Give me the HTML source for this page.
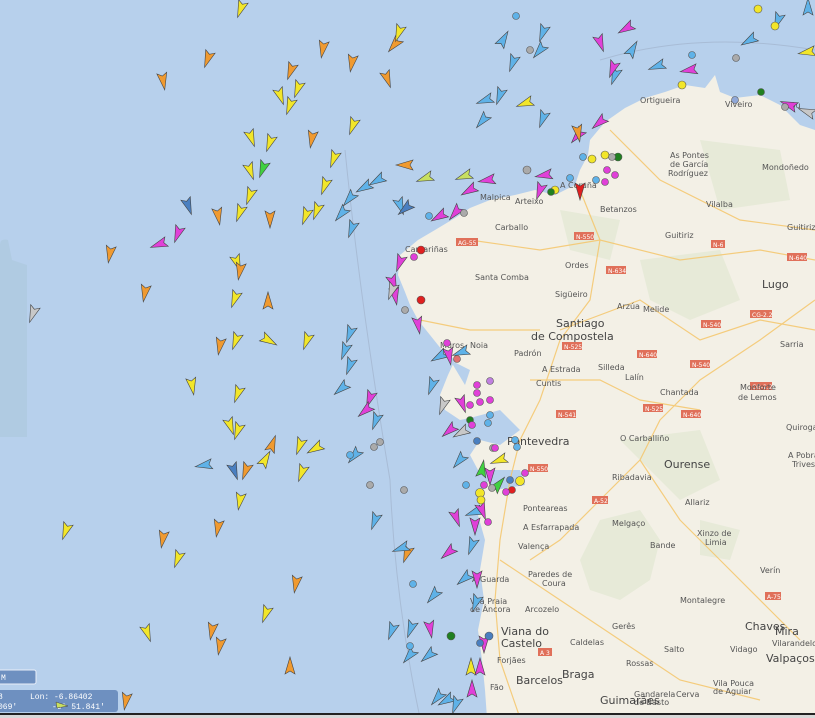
<!DOCTYPE html>
<html><head><meta charset="utf-8"><style>
html,body{margin:0;padding:0;width:815px;height:718px;overflow:hidden;background:#b7d0ec;font-family:"Liberation Sans",sans-serif}
svg{display:block}
.t{font-family:"DejaVu Sans","Liberation Sans",sans-serif;font-size:8px;fill:#555}
.tb{font-family:"DejaVu Sans","Liberation Sans",sans-serif;font-size:11px;fill:#444}
.r{fill:#e0705a}
.rt{font-family:"DejaVu Sans",sans-serif;font-size:6px;fill:#fff}
</style></head><body>
<svg width="815" height="718" viewBox="0 0 815 718" xmlns="http://www.w3.org/2000/svg">
<defs>
<path id="s" d="M0,-10 L5,7 L0,4 L-5,7 Z" stroke="#444" stroke-width="0.6"/>
</defs>
<rect width="815" height="718" fill="#b7d0ec"/>
<path d="M0,245 Q0,238 8,240 L12,260 L27,265 L27,437 L0,437 Z" fill="#b0cbe2"/>
<path d="M345,150 Q360,300 390,480 Q395,600 420,718" stroke="#a8bcd6" fill="none" stroke-width="1"/>
<path d="M600,60 Q700,30 815,50" stroke="#a8bcd6" fill="none" stroke-width="1"/>
<!-- land -->
<path d="M815,130 L800,125 L780,105 L760,95 L735,98 L720,92 L715,75 L705,88 L685,85 L665,92 L645,98 L625,108 L605,122 L590,140 L588,155 L580,170 L575,185 L555,195 L535,190 L515,195 L490,200 L470,208 L455,218 L435,230 L418,240 L400,255 L398,275 L405,292 L410,305 L418,320 L430,335 L442,350 L455,360 L448,375 L440,395 L445,410 L460,420 L470,418 L480,440 L470,455 L478,470 L490,478 L480,495 L478,515 L485,540 L480,570 L484,600 L478,630 L482,660 L485,690 L487,718 L815,718 Z" fill="#f3f0e6"/>
<path d="M470,418 L500,410 L520,430 L500,445 L480,440Z M480,470 L520,470 L525,485 L495,490Z M450,360 L470,370 L465,385Z" fill="#b7d0ec"/>
<path d="M600,520 L640,510 L660,540 L650,580 L620,600 L590,590 L580,560Z M700,520 L740,530 L730,560 L700,555Z M620,440 L700,430 L720,480 L680,500Z M560,210 L620,220 L610,260 L570,250Z M640,260 L720,250 L740,300 L690,320 L650,300Z M700,140 L780,150 L790,200 L720,210Z" fill="#e4e8d4" opacity="0.8"/>
<g stroke="#f5c66b" stroke-width="1.2" fill="none" opacity="0.85">
<path d="M580,190 L600,240 L590,300 L560,340 L540,400 L520,440 L510,480 L500,540 L495,600 L500,660 L520,718"/>
<path d="M560,330 L640,300 L700,340 L760,320 L815,330"/>
<path d="M640,460 L660,420 L700,380 L760,340 L815,300"/>
<path d="M640,460 L680,520 L720,560 L770,610 L800,640"/>
<path d="M610,130 L660,180 L740,220 L815,230"/>
<path d="M470,240 L540,250 L600,240 L680,260 L760,250 L815,260"/>
<path d="M530,380 L600,380 L640,400 L700,410"/>
<path d="M500,560 L560,600 L620,640 L680,680 L760,700"/>
<path d="M640,460 L600,500 L560,540 L530,560"/>
<path d="M420,320 L470,330 L540,330"/>
</g>
<!-- road shields -->
<g>
<rect class="r" x="456" y="238" width="22" height="8"/><text class="rt" x="458" y="245">AG-55</text>
<rect class="r" x="574" y="232" width="20" height="8"/><text class="rt" x="576" y="239">N-550</text>
<rect class="r" x="606" y="266" width="20" height="8"/><text class="rt" x="608" y="273">N-634</text>
<rect class="r" x="711" y="240" width="14" height="8"/><text class="rt" x="713" y="247">N-6</text>
<rect class="r" x="787" y="253" width="20" height="8"/><text class="rt" x="789" y="260">N-640</text>
<rect class="r" x="562" y="342" width="20" height="8"/><text class="rt" x="564" y="349">N-525</text>
<rect class="r" x="637" y="350" width="20" height="8"/><text class="rt" x="639" y="357">N-640</text>
<rect class="r" x="701" y="320" width="20" height="8"/><text class="rt" x="703" y="327">N-540</text>
<rect class="r" x="750" y="310" width="22" height="8"/><text class="rt" x="752" y="317">CG-2.2</text>
<rect class="r" x="750" y="382" width="22" height="8"/><text class="rt" x="752" y="389">CG-2.2</text>
<rect class="r" x="690" y="360" width="20" height="8"/><text class="rt" x="692" y="367">N-540</text>
<rect class="r" x="556" y="410" width="20" height="8"/><text class="rt" x="558" y="417">N-541</text>
<rect class="r" x="643" y="404" width="20" height="8"/><text class="rt" x="645" y="411">N-525</text>
<rect class="r" x="681" y="410" width="20" height="8"/><text class="rt" x="683" y="417">N-640</text>
<rect class="r" x="528" y="464" width="20" height="8"/><text class="rt" x="530" y="471">N-550</text>
<rect class="r" x="592" y="496" width="16" height="8"/><text class="rt" x="594" y="503">A-52</text>
<rect class="r" x="765" y="592" width="16" height="8"/><text class="rt" x="767" y="599">A-75</text>
<rect class="r" x="538" y="648" width="14" height="8"/><text class="rt" x="540" y="655">A 3</text>
</g>
<!-- labels -->
<g class="t">
<text x="640" y="103">Ortigueira</text><text x="725" y="107">Viveiro</text><text x="790" y="108">Bu</text>
<text x="670" y="158">As Pontes</text><text x="670" y="167">de García</text><text x="668" y="176">Rodríguez</text>
<text x="762" y="170">Mondoñedo</text><text x="560" y="188">A Coruña</text><text x="515" y="204">Arteixo</text>
<text x="480" y="200">Malpica</text><text x="600" y="212">Betanzos</text><text x="495" y="230">Carballo</text>
<text x="706" y="207">Vilalba</text><text x="787" y="230">Guitiriz</text><text x="665" y="238">Guitiriz</text>
<text x="405" y="252">Camariñas</text><text x="565" y="268">Ordes</text><text x="475" y="280">Santa Comba</text>
<text x="555" y="297">Sigüeiro</text><text x="617" y="309">Arzúa</text><text x="643" y="312">Melide</text>
<text x="780" y="347">Sarria</text><text x="440" y="348">Muros</text><text x="470" y="348">Noia</text>
<text x="514" y="356">Padrón</text><text x="542" y="372">A Estrada</text><text x="598" y="370">Silleda</text>
<text x="625" y="380">Lalín</text><text x="536" y="386">Cuntis</text><text x="660" y="395">Chantada</text>
<text x="740" y="390">Monforte</text><text x="738" y="400">de Lemos</text><text x="786" y="430">Quiroga</text>
<text x="620" y="441">O Carballiño</text><text x="788" y="458">A Pobra</text><text x="792" y="467">Trives</text>
<text x="612" y="480">Ribadavia</text><text x="685" y="505">Allariz</text>
<text x="697" y="536">Xinzo de</text><text x="705" y="545">Limia</text><text x="760" y="573">Verín</text>
<text x="650" y="548">Bande</text><text x="523" y="511">Ponteareas</text><text x="523" y="530">A Esfarrapada</text>
<text x="612" y="526">Melgaço</text><text x="518" y="549">Valença</text><text x="528" y="577">Paredes de</text><text x="542" y="586">Coura</text>
<text x="680" y="603">Montalegre</text><text x="525" y="612">Arcozelo</text><text x="472" y="582">A Guarda</text>
<text x="470" y="604">Vila Praia</text><text x="470" y="612">de Âncora</text><text x="612" y="629">Gerês</text>
<text x="570" y="645">Caldelas</text><text x="664" y="652">Salto</text><text x="730" y="652">Vidago</text>
<text x="772" y="646">Vilarandelo</text><text x="626" y="666">Rossas</text><text x="497" y="663">Forjães</text>
<text x="713" y="686">Vila Pouca</text><text x="713" y="694">de Aguiar</text><text x="634" y="697">Gandarela</text><text x="634" y="705">de Basto</text>
<text x="676" y="697">Cerva</text><text x="490" y="690">Fão</text>
</g>
<g class="tb">
<text x="556" y="327">Santiago</text><text x="531" y="328" dy="12">de Compostela</text>
<text x="762" y="288">Lugo</text><text x="664" y="468">Ourense</text><text x="507" y="445">Pontevedra</text>
<text x="745" y="630">Chaves</text><text x="501" y="635">Viana do</text><text x="501" y="647">Castelo</text>
<text x="516" y="684">Barcelos</text><text x="562" y="678">Braga</text><text x="766" y="662">Valpaços</text>
<text x="775" y="635">Mira</text><text x="600" y="704">Guimarães</text>
</g>
<!-- ships -->
<g>
<use href="#s" fill="#f2e62a" transform="translate(241,8) rotate(200)"/>
<use href="#s" fill="#f09a30" transform="translate(208,58) rotate(200)"/>
<use href="#s" fill="#f09a30" transform="translate(163,80) rotate(170)"/>
<use href="#s" fill="#f09a30" transform="translate(323,48) rotate(190)"/>
<use href="#s" fill="#f09a30" transform="translate(395,44) rotate(220)"/>
<use href="#s" fill="#f2e62a" transform="translate(399,32) rotate(200)"/>
<use href="#s" fill="#f09a30" transform="translate(352,62) rotate(190)"/>
<use href="#s" fill="#f09a30" transform="translate(291,70) rotate(200)"/>
<use href="#s" fill="#f2e62a" transform="translate(298,88) rotate(200)"/>
<use href="#s" fill="#f2e62a" transform="translate(280,95) rotate(160)"/>
<use href="#s" fill="#f2e62a" transform="translate(290,105) rotate(200)"/>
<use href="#s" fill="#f09a30" transform="translate(387,78) rotate(160)"/>
<use href="#s" fill="#f2e62a" transform="translate(353,125) rotate(200)"/>
<use href="#s" fill="#f09a30" transform="translate(312,138) rotate(190)"/>
<use href="#s" fill="#f2e62a" transform="translate(251,137) rotate(160)"/>
<use href="#s" fill="#f2e62a" transform="translate(270,142) rotate(200)"/>
<use href="#s" fill="#40d040" transform="translate(263,168) rotate(200)"/>
<use href="#s" fill="#f2e62a" transform="translate(250,170) rotate(160)"/>
<use href="#s" fill="#f2e62a" transform="translate(250,195) rotate(200)"/>
<use href="#s" fill="#f2e62a" transform="translate(334,158) rotate(200)"/>
<use href="#s" fill="#f2e62a" transform="translate(325,185) rotate(200)"/>
<use href="#s" fill="#f2e62a" transform="translate(317,210) rotate(200)"/>
<use href="#s" fill="#f2e62a" transform="translate(306,215) rotate(200)"/>
<use href="#s" fill="#4a7fc0" transform="translate(188,205) rotate(160)"/>
<use href="#s" fill="#f09a30" transform="translate(218,215) rotate(170)"/>
<use href="#s" fill="#f2e62a" transform="translate(240,212) rotate(200)"/>
<use href="#s" fill="#f09a30" transform="translate(270,218) rotate(180)"/>
<use href="#s" fill="#e040d8" transform="translate(160,244) rotate(250)"/>
<use href="#s" fill="#e040d8" transform="translate(178,233) rotate(200)"/>
<use href="#s" fill="#f09a30" transform="translate(110,253) rotate(190)"/>
<use href="#s" fill="#f2e62a" transform="translate(237,262) rotate(160)"/>
<use href="#s" fill="#f09a30" transform="translate(240,270) rotate(190)"/>
<use href="#s" fill="#f09a30" transform="translate(145,292) rotate(190)"/>
<use href="#s" fill="#f2e62a" transform="translate(235,298) rotate(200)"/>
<use href="#s" fill="#f09a30" transform="translate(268,302) rotate(0)"/>
<use href="#s" fill="#f09a30" transform="translate(220,345) rotate(190)"/>
<use href="#s" fill="#f2e62a" transform="translate(236,340) rotate(200)"/>
<use href="#s" fill="#f2e62a" transform="translate(268,340) rotate(120)"/>
<use href="#s" fill="#f2e62a" transform="translate(307,340) rotate(200)"/>
<use href="#s" fill="#f2e62a" transform="translate(192,385) rotate(170)"/>
<use href="#s" fill="#f2e62a" transform="translate(238,393) rotate(200)"/>
<use href="#s" fill="#f2e62a" transform="translate(230,425) rotate(160)"/>
<use href="#s" fill="#f2e62a" transform="translate(238,430) rotate(200)"/>
<use href="#s" fill="#f09a30" transform="translate(272,445) rotate(20)"/>
<use href="#s" fill="#f2e62a" transform="translate(265,460) rotate(30)"/>
<use href="#s" fill="#f2e62a" transform="translate(300,445) rotate(200)"/>
<use href="#s" fill="#f2e62a" transform="translate(316,448) rotate(240)"/>
<use href="#s" fill="#5fb2e8" transform="translate(205,465) rotate(260)"/>
<use href="#s" fill="#4a7fc0" transform="translate(234,470) rotate(160)"/>
<use href="#s" fill="#f09a30" transform="translate(246,470) rotate(200)"/>
<use href="#s" fill="#f2e62a" transform="translate(302,472) rotate(200)"/>
<use href="#s" fill="#f2e62a" transform="translate(240,500) rotate(190)"/>
<use href="#s" fill="#f2e62a" transform="translate(66,530) rotate(200)"/>
<use href="#s" fill="#f09a30" transform="translate(218,527) rotate(190)"/>
<use href="#s" fill="#f09a30" transform="translate(163,538) rotate(190)"/>
<use href="#s" fill="#f2e62a" transform="translate(178,558) rotate(200)"/>
<use href="#s" fill="#f09a30" transform="translate(296,583) rotate(190)"/>
<use href="#s" fill="#f2e62a" transform="translate(147,632) rotate(160)"/>
<use href="#s" fill="#f09a30" transform="translate(212,630) rotate(190)"/>
<use href="#s" fill="#f09a30" transform="translate(220,645) rotate(190)"/>
<use href="#s" fill="#f09a30" transform="translate(290,667) rotate(0)"/>
<use href="#s" fill="#f2e62a" transform="translate(266,613) rotate(200)"/>
<use href="#s" fill="#f09a30" transform="translate(126,700) rotate(190)"/>
<use href="#s" fill="#c8c8c8" transform="translate(33,313) rotate(200)"/>
<!-- coastal -->
<use href="#s" fill="#5fb2e8" transform="translate(486,100) rotate(250)"/>
<use href="#s" fill="#5fb2e8" transform="translate(483,120) rotate(220)"/>
<use href="#s" fill="#5fb2e8" transform="translate(500,95) rotate(200)"/>
<use href="#s" fill="#f2e62a" transform="translate(526,103) rotate(250)"/>
<use href="#s" fill="#5fb2e8" transform="translate(543,118) rotate(200)"/>
<use href="#s" fill="#5fb2e8" transform="translate(513,62) rotate(200)"/>
<use href="#s" fill="#5fb2e8" transform="translate(540,50) rotate(220)"/>
<use href="#s" fill="#5fb2e8" transform="translate(543,32) rotate(200)"/>
<use href="#s" fill="#5fb2e8" transform="translate(503,40) rotate(30)"/>
<use href="#s" fill="#5fb2e8" transform="translate(615,75) rotate(200)"/>
<use href="#s" fill="#5fb2e8" transform="translate(632,50) rotate(30)"/>
<use href="#s" fill="#e040d8" transform="translate(627,28) rotate(240)"/>
<use href="#s" fill="#e040d8" transform="translate(613,68) rotate(200)"/>
<use href="#s" fill="#e040d8" transform="translate(600,42) rotate(160)"/>
<use href="#s" fill="#5fb2e8" transform="translate(658,66) rotate(250)"/>
<use href="#s" fill="#e040d8" transform="translate(690,70) rotate(260)"/>
<use href="#s" fill="#5fb2e8" transform="translate(750,40) rotate(240)"/>
<use href="#s" fill="#5fb2e8" transform="translate(778,20) rotate(200)"/>
<use href="#s" fill="#5fb2e8" transform="translate(808,8) rotate(0)"/>
<use href="#s" fill="#f2e62a" transform="translate(808,52) rotate(260)"/>
<use href="#s" fill="#e040d8" transform="translate(790,105) rotate(290)"/>
<use href="#s" fill="#c8c8c8" transform="translate(808,112) rotate(290)"/>
<use href="#s" fill="#e040d8" transform="translate(578,135) rotate(220)"/>
<use href="#s" fill="#e040d8" transform="translate(600,122) rotate(230)"/>
<use href="#s" fill="#f09a30" transform="translate(578,132) rotate(170)"/>
<use href="#s" fill="#f09a30" transform="translate(406,165) rotate(270)"/>
<use href="#s" fill="#c8e060" transform="translate(426,178) rotate(250)"/>
<use href="#s" fill="#c8e060" transform="translate(465,176) rotate(250)"/>
<use href="#s" fill="#5fb2e8" transform="translate(378,180) rotate(240)"/>
<use href="#s" fill="#5fb2e8" transform="translate(365,187) rotate(240)"/>
<use href="#s" fill="#5fb2e8" transform="translate(350,198) rotate(220)"/>
<use href="#s" fill="#5fb2e8" transform="translate(342,213) rotate(220)"/>
<use href="#s" fill="#5fb2e8" transform="translate(352,228) rotate(200)"/>
<use href="#s" fill="#5fb2e8" transform="translate(400,205) rotate(160)"/>
<use href="#s" fill="#4a7fc0" transform="translate(406,208) rotate(230)"/>
<use href="#s" fill="#e040d8" transform="translate(440,216) rotate(240)"/>
<use href="#s" fill="#e040d8" transform="translate(456,212) rotate(220)"/>
<use href="#s" fill="#e040d8" transform="translate(470,190) rotate(240)"/>
<use href="#s" fill="#e040d8" transform="translate(488,180) rotate(260)"/>
<use href="#s" fill="#e040d8" transform="translate(545,175) rotate(260)"/>
<use href="#s" fill="#e040d8" transform="translate(540,190) rotate(200)"/>
<use href="#s" fill="#e02020" transform="translate(580,190) rotate(180)"/>
<use href="#s" fill="#e040d8" transform="translate(400,262) rotate(200)"/>
<use href="#s" fill="#e040d8" transform="translate(393,282) rotate(160)"/>
<use href="#s" fill="#e040d8" transform="translate(395,295) rotate(170)"/>
<use href="#s" fill="#c8c8c8" transform="translate(392,290) rotate(200)"/>
<use href="#s" fill="#e040d8" transform="translate(418,324) rotate(170)"/>
<use href="#s" fill="#5fb2e8" transform="translate(350,333) rotate(200)"/>
<use href="#s" fill="#5fb2e8" transform="translate(345,350) rotate(200)"/>
<use href="#s" fill="#5fb2e8" transform="translate(440,356) rotate(240)"/>
<use href="#s" fill="#5fb2e8" transform="translate(462,352) rotate(250)"/>
<use href="#s" fill="#e040d8" transform="translate(449,355) rotate(170)"/>
<use href="#s" fill="#5fb2e8" transform="translate(350,365) rotate(200)"/>
<use href="#s" fill="#5fb2e8" transform="translate(342,388) rotate(230)"/>
<use href="#s" fill="#5fb2e8" transform="translate(432,385) rotate(200)"/>
<use href="#s" fill="#e040d8" transform="translate(370,398) rotate(200)"/>
<use href="#s" fill="#e040d8" transform="translate(366,410) rotate(230)"/>
<use href="#s" fill="#5fb2e8" transform="translate(376,420) rotate(200)"/>
<use href="#s" fill="#c8c8c8" transform="translate(443,405) rotate(200)"/>
<use href="#s" fill="#e040d8" transform="translate(462,403) rotate(160)"/>
<use href="#s" fill="#e040d8" transform="translate(450,430) rotate(230)"/>
<use href="#s" fill="#c8c8c8" transform="translate(462,432) rotate(240)"/>
<use href="#s" fill="#5fb2e8" transform="translate(460,460) rotate(220)"/>
<use href="#s" fill="#5fb2e8" transform="translate(355,455) rotate(220)"/>
<use href="#s" fill="#40d040" transform="translate(482,470) rotate(10)"/>
<use href="#s" fill="#40d040" transform="translate(498,485) rotate(40)"/>
<use href="#s" fill="#e040d8" transform="translate(490,475) rotate(180)"/>
<use href="#s" fill="#f2e62a" transform="translate(500,460) rotate(250)"/>
<use href="#s" fill="#5fb2e8" transform="translate(475,512) rotate(250)"/>
<use href="#s" fill="#e040d8" transform="translate(456,517) rotate(160)"/>
<use href="#s" fill="#e040d8" transform="translate(482,510) rotate(160)"/>
<use href="#s" fill="#e040d8" transform="translate(475,525) rotate(180)"/>
<use href="#s" fill="#5fb2e8" transform="translate(375,520) rotate(200)"/>
<use href="#s" fill="#f09a30" transform="translate(407,553) rotate(200)"/>
<use href="#s" fill="#5fb2e8" transform="translate(402,548) rotate(250)"/>
<use href="#s" fill="#e040d8" transform="translate(449,552) rotate(230)"/>
<use href="#s" fill="#5fb2e8" transform="translate(472,545) rotate(200)"/>
<use href="#s" fill="#e040d8" transform="translate(477,578) rotate(180)"/>
<use href="#s" fill="#5fb2e8" transform="translate(465,578) rotate(230)"/>
<use href="#s" fill="#5fb2e8" transform="translate(434,595) rotate(220)"/>
<use href="#s" fill="#5fb2e8" transform="translate(476,602) rotate(200)"/>
<use href="#s" fill="#5fb2e8" transform="translate(392,630) rotate(200)"/>
<use href="#s" fill="#5fb2e8" transform="translate(411,628) rotate(200)"/>
<use href="#s" fill="#e040d8" transform="translate(430,628) rotate(170)"/>
<use href="#s" fill="#5fb2e8" transform="translate(410,655) rotate(220)"/>
<use href="#s" fill="#5fb2e8" transform="translate(429,655) rotate(230)"/>
<use href="#s" fill="#f2e62a" transform="translate(471,668) rotate(0)"/>
<use href="#s" fill="#e040d8" transform="translate(480,668) rotate(0)"/>
<use href="#s" fill="#e040d8" transform="translate(472,690) rotate(0)"/>
<use href="#s" fill="#5fb2e8" transform="translate(438,697) rotate(220)"/>
<use href="#s" fill="#5fb2e8" transform="translate(447,700) rotate(240)"/>
<use href="#s" fill="#5fb2e8" transform="translate(456,704) rotate(200)"/>
<use href="#s" fill="#e040d8" transform="translate(484,643) rotate(180)"/>
</g>
<!-- dots -->
<g stroke="#555" stroke-width="0.6">
<circle cx="516" cy="16" r="3.5" fill="#5fb2e8"/><circle cx="530" cy="50" r="3.5" fill="#aaa"/>
<circle cx="692" cy="55" r="3.5" fill="#5fb2e8"/><circle cx="736" cy="58" r="3.5" fill="#aaa"/>
<circle cx="758" cy="9" r="4" fill="#f2e62a"/><circle cx="775" cy="26" r="4" fill="#f2e62a"/>
<circle cx="682" cy="85" r="4" fill="#f2e62a"/><circle cx="735" cy="100" r="3.5" fill="#90a8d8"/>
<circle cx="761" cy="92" r="3.5" fill="#208020"/><circle cx="785" cy="107" r="3.5" fill="#aaa"/>
<circle cx="583" cy="157" r="3.5" fill="#5fb2e8"/><circle cx="592" cy="159" r="4" fill="#f2e62a"/>
<circle cx="605" cy="155" r="4" fill="#f2e62a"/><circle cx="618" cy="157" r="4" fill="#208020"/>
<circle cx="612" cy="157" r="3.5" fill="#aaa"/>
<circle cx="555" cy="190" r="4" fill="#f2e62a"/><circle cx="551" cy="192" r="3.5" fill="#208020"/>
<circle cx="527" cy="170" r="4" fill="#aaa"/><circle cx="570" cy="178" r="3.5" fill="#5fb2e8"/>
<circle cx="607" cy="170" r="3.5" fill="#e040d8"/><circle cx="615" cy="175" r="3.5" fill="#e040d8"/>
<circle cx="605" cy="182" r="3.5" fill="#e040d8"/><circle cx="596" cy="180" r="3.5" fill="#5fb2e8"/>
<circle cx="429" cy="216" r="3.5" fill="#5fb2e8"/><circle cx="464" cy="213" r="3.5" fill="#aaa"/>
<circle cx="421" cy="250" r="4" fill="#e02020"/><circle cx="414" cy="257" r="3.5" fill="#e040d8"/>
<circle cx="421" cy="300" r="4" fill="#e02020"/><circle cx="405" cy="310" r="3.5" fill="#aaa"/>
<circle cx="447" cy="343" r="3.5" fill="#e040d8"/><circle cx="457" cy="359" r="3.5" fill="#e07070"/>
<circle cx="477" cy="385" r="3.5" fill="#e040d8"/><circle cx="490" cy="381" r="3.5" fill="#c080e0"/>
<circle cx="477" cy="393" r="3.5" fill="#e040d8"/><circle cx="470" cy="405" r="3.5" fill="#e040d8"/>
<circle cx="480" cy="402" r="3.5" fill="#e040d8"/><circle cx="490" cy="400" r="3.5" fill="#e040d8"/>
<circle cx="470" cy="420" r="3.5" fill="#208020"/><circle cx="490" cy="415" r="3.5" fill="#5fb2e8"/>
<circle cx="472" cy="425" r="3.5" fill="#e040d8"/><circle cx="488" cy="423" r="3.5" fill="#5fb2e8"/>
<circle cx="380" cy="442" r="3.5" fill="#aaa"/><circle cx="374" cy="447" r="3.5" fill="#aaa"/>
<circle cx="477" cy="441" r="3.5" fill="#4a7fc0"/><circle cx="493" cy="448" r="3.5" fill="#aaa"/>
<circle cx="495" cy="448" r="3.5" fill="#e040d8"/><circle cx="515" cy="440" r="3.5" fill="#5fb2e8"/>
<circle cx="517" cy="447" r="3.5" fill="#5fb2e8"/>
<circle cx="525" cy="473" r="3.5" fill="#e040d8"/><circle cx="510" cy="480" r="3.5" fill="#4a7fc0"/>
<circle cx="520" cy="481" r="4.5" fill="#f2e62a"/><circle cx="512" cy="490" r="3.5" fill="#e02020"/>
<circle cx="506" cy="492" r="3.5" fill="#e040d8"/><circle cx="484" cy="485" r="3.5" fill="#e040d8"/>
<circle cx="480" cy="493" r="4.5" fill="#f2e62a"/><circle cx="481" cy="500" r="4" fill="#f2e62a"/>
<circle cx="492" cy="488" r="3.5" fill="#aaa"/><circle cx="466" cy="485" r="3.5" fill="#5fb2e8"/>
<circle cx="488" cy="522" r="3.5" fill="#e040d8"/>
<circle cx="404" cy="490" r="3.5" fill="#aaa"/><circle cx="370" cy="485" r="3.5" fill="#aaa"/>
<circle cx="350" cy="455" r="3.5" fill="#5fb2e8"/><circle cx="413" cy="584" r="3.5" fill="#5fb2e8"/>
<circle cx="451" cy="636" r="4" fill="#208020"/><circle cx="489" cy="636" r="4" fill="#4a7fc0"/>
<circle cx="480" cy="643" r="3.5" fill="#4a7fc0"/><circle cx="410" cy="646" r="3.5" fill="#5fb2e8"/>
</g>
<!-- bottom line -->
<rect x="0" y="713" width="815" height="2" fill="#222"/>
<rect x="0" y="715" width="815" height="3" fill="#d8d8d8"/>
<!-- control panels -->
<rect x="-6" y="670" width="42" height="14" rx="2" fill="#6e90c0" stroke="#e8eef8" stroke-width="1"/>
<text x="1" y="680" font-family="Liberation Mono,monospace" font-size="8" fill="#fff">M</text>
<rect x="-6" y="690" width="124" height="22" rx="3" fill="#6e90c0"/>
<text x="-2" y="699" font-family="Liberation Mono,monospace" font-size="8" fill="#fff">8</text>
<text x="30" y="699" font-family="Liberation Mono,monospace" font-size="8" fill="#fff">Lon: -6.86402</text>
<text x="-2" y="709" font-family="Liberation Mono,monospace" font-size="8" fill="#fff">069'</text>
<text x="52" y="709" font-family="Liberation Mono,monospace" font-size="8" fill="#fff">-6° 51.841'</text>
<path d="M56,702 L68,706 L57,708 Z" fill="#c8e060" stroke="#444" stroke-width="0.5"/>
</svg>
</body></html>
